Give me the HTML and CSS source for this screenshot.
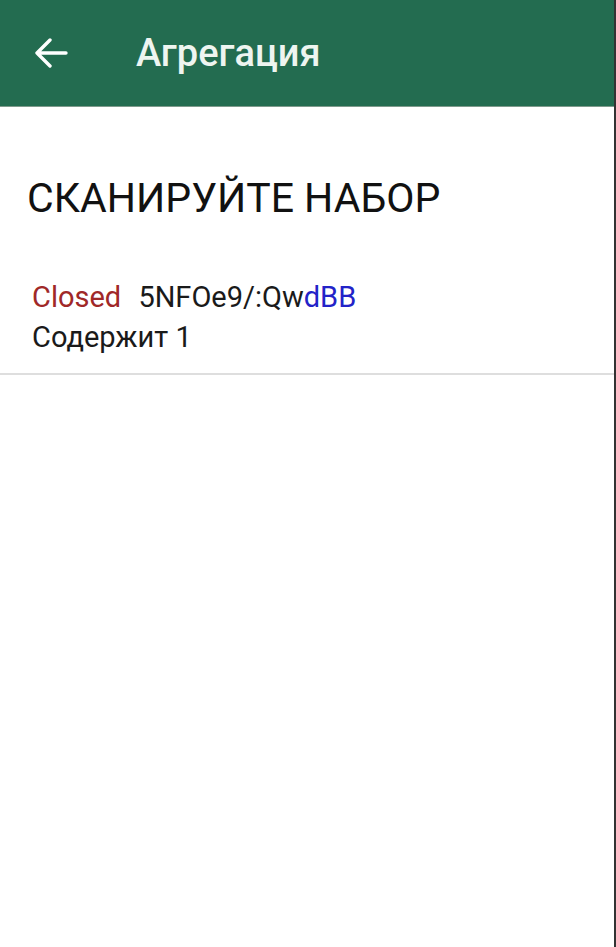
FILE: index.html
```html
<!DOCTYPE html>
<html lang="ru">
<head>
<meta charset="utf-8">
<title>Агрегация</title>
<link rel="stylesheet" href="styles.css">
</head>
<body>
<div class="screen">
  <header class="toolbar">
    <button class="back" aria-label="Назад">
      <svg width="34" height="30" viewBox="0 0 34 30">
        <path d="M3 15 H32 M16 2 L3 15 L16 28" fill="none" stroke="#ffffff" stroke-width="3.4" stroke-linecap="round" stroke-linejoin="round"/>
      </svg>
    </button>
    <h1 class="title">Агрегация</h1>
  </header>
  <main class="content">
    <h2 class="prompt">СКАНИРУЙТЕ НАБОР</h2>
    <div class="item">
      <div class="item-line">
        <span class="status">Closed</span>
        <span class="code">5NFOe9/:Qw<span class="code-tail">dBB</span></span>
      </div>
      <div class="item-line">Содержит 1</div>
    </div>
  </main>
</div>
</body>
</html>
```

FILE: styles.css
```css
html, body {
  margin: 0;
  padding: 0;
  background: #ffffff;
}

.screen {
  width: 616px;
  height: 947px;
  display: flex;
  flex-direction: column;
  font-family: Roboto, "Noto Sans", sans-serif;
  box-sizing: border-box;
  border-right: 2px solid #333333;
}

.toolbar {
  height: 107px;
  background: #236c50;
  border-bottom: 1px solid #7f9a8c;
  display: flex;
  align-items: center;
  padding-left: 34px;
  box-sizing: border-box;
  flex-shrink: 0;
}

.back {
  background: none;
  border: 0;
  padding: 0;
  width: 34px;
  height: 30px;
  display: flex;
  cursor: pointer;
}

.title {
  margin: 0 0 0 68px;
  font-size: 38px;
  font-weight: 500;
  color: #eef5f0;
}

.content {
  flex: 1;
  display: flex;
  flex-direction: column;
}

.prompt {
  margin: 68px 0 0 27px;
  font-size: 41px;
  font-weight: 400;
  color: #111111;
  line-height: 46px;
}

.item {
  margin-top: 56px;
  padding: 0 0 16px 32px;
  border-bottom: 2px solid #dedede;
  font-size: 29px;
  line-height: 40px;
  color: #1a1a1a;
}

.status {
  color: #a02828;
  margin-right: 10px;
}

.code-tail {
  color: #2323c8;
}
```
